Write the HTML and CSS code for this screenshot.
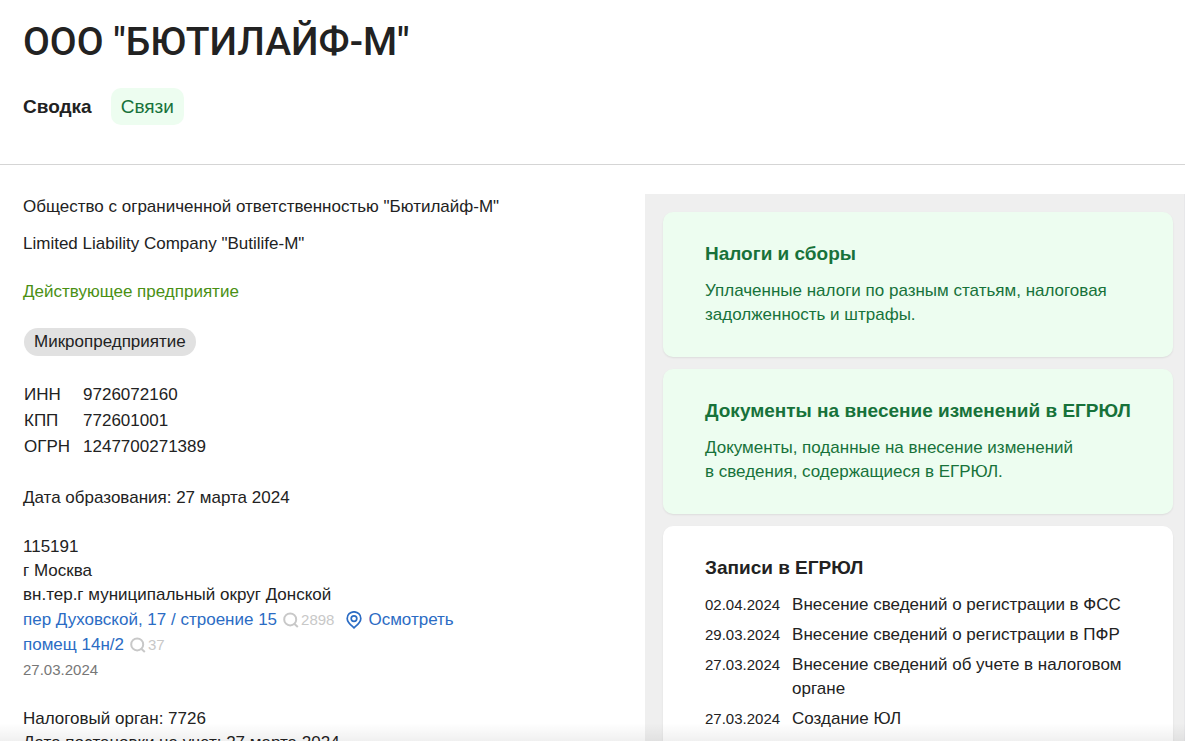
FILE: index.html
```html
<!DOCTYPE html>
<html lang="ru">
<head>
<meta charset="utf-8">
<title>ООО "БЮТИЛАЙФ-М"</title>
<link rel="stylesheet" href="styles.css">
</head>
<body>
<header class="header">
  <h1 class="title">ООО "БЮТИЛАЙФ-М"</h1>
  <nav class="tabs">
    <span class="tab tab-current">Сводка</span>
    <a class="tab tab-link" href="#links">Связи</a>
  </nav>
</header>
<main class="content">
  <section class="summary">
    <p class="full-name">Общество с ограниченной ответственностью "Бютилайф-М"</p>
    <p class="latin-name">Limited Liability Company "Butilife-M"</p>
    <p class="status">Действующее предприятие</p>
    <p class="badge-row"><span class="badge">Микропредприятие</span></p>
    <table class="codes">
      <tr><th scope="row">ИНН</th><td>9726072160</td></tr>
      <tr><th scope="row">КПП</th><td>772601001</td></tr>
      <tr><th scope="row">ОГРН</th><td>1247700271389</td></tr>
    </table>
    <p class="founded">Дата образования: 27 марта 2024</p>
    <address class="address">
      <div>115191</div>
      <div>г Москва</div>
      <div>вн.тер.г муниципальный округ Донской</div>
      <div class="address-line">
        <a href="#street">пер Духовской, 17 / строение 15</a>
        <span class="found"><svg class="lens" viewBox="0 0 16 16" aria-hidden="true"><circle cx="7.2" cy="7.4" r="6"/><path d="M11 11.4l3.8 3.6"/></svg>2898</span>
        <a class="view" href="#map"><svg class="pin" viewBox="0 0 16 18" aria-hidden="true"><path d="M8 16.8C5.6 14.6 1.2 11.6 1.2 7.4a6.8 6.6 0 0 1 13.6 0c0 4.2-4.4 7.2-6.8 9.4z"/><circle cx="8" cy="7.6" r="2.8"/></svg>Осмотреть</a>
      </div>
      <div class="address-line">
        <a href="#room">помещ 14н/2</a>
        <span class="found"><svg class="lens" viewBox="0 0 16 16" aria-hidden="true"><circle cx="7.2" cy="7.4" r="6"/><path d="M11 11.4l3.8 3.6"/></svg>37</span>
      </div>
      <div class="address-date">27.03.2024</div>
    </address>
    <div class="tax">
      <div>Налоговый орган: 7726</div>
      <div>Дата постановки на учет: 27 марта 2024</div>
    </div>
  </section>
  <aside class="panel">
    <a class="card card-green" href="#taxes">
      <h2 class="card-title">Налоги и сборы</h2>
      <p class="card-text">Уплаченные налоги по разным статьям, налоговая задолженность и штрафы.</p>
    </a>
    <a class="card card-green" href="#documents">
      <h2 class="card-title">Документы на внесение изменений в ЕГРЮЛ</h2>
      <p class="card-text">Документы, поданные на внесение изменений<br>в&nbsp;сведения, содержащиеся в&nbsp;ЕГРЮЛ.</p>
    </a>
    <section class="card card-records">
      <h2 class="card-title">Записи в ЕГРЮЛ</h2>
      <dl class="records">
        <dt>02.04.2024</dt><dd>Внесение сведений о регистрации в ФСС</dd>
        <dt>29.03.2024</dt><dd>Внесение сведений о регистрации в ПФР</dd>
        <dt>27.03.2024</dt><dd>Внесение сведений об учете в налоговом органе</dd>
        <dt>27.03.2024</dt><dd>Создание ЮЛ</dd>
      </dl>
    </section>
  </aside>
</main>
<div class="fade"></div>
</body>
</html>
```
FILE: styles.css
```css
* { box-sizing: border-box; }
body {
  margin: 0;
  height: 100vh;
  overflow: hidden;
  display: flex;
  flex-direction: column;
  background: #fff;
  color: #222;
  font: 17px/24px "Liberation Sans", Arial, sans-serif;
}
h1, h2, p, dl, dd { margin: 0; }
a { color: #2b6cc4; text-decoration: none; }

.header {
  flex: none;
  padding: 19px 23px 39px;
  border-bottom: 1px solid #d5d5d5;
}
.title { font: 500 39px/46px Roboto, sans-serif; }
.tabs { display: flex; gap: 19px; margin-top: 23px; }
.tab { font-size: 19px; line-height: 25px; padding: 6px 0; }
.tab-current { font-weight: 700; }
.tab-link {
  padding: 6px 10px;
  border-radius: 10px;
  background: #edfdf0;
  color: #17723a;
}

.content {
  flex: 1;
  min-height: 0;
  display: grid;
  grid-template-columns: minmax(0, 645fr) minmax(0, 540fr);
  padding-top: 29px;
}
.summary { padding: 1px 0 0 23px; }
.latin-name { margin-top: 13px; }
.status { margin-top: 24px; color: #4a9014; }
.badge-row { margin: 24px 0 0 1px; display: flex; }
.badge {
  padding: 2px 10px;
  border-radius: 14px;
  background: #e1e1e1;
}
.codes { margin: 26px 0 0 1px; border-spacing: 0; line-height: 26px; }
.codes th, .codes td { padding: 0; font-weight: 400; text-align: left; }
.codes th { padding-right: 13px; }
.founded { margin-top: 26px; }
.address { margin-top: 25px; font-style: normal; }
.address-line, .address-date { line-height: 25px; }
.address-line { display: flex; align-items: center; gap: 6px; }
.found { display: flex; align-items: center; gap: 2px; color: #c8c8c8; font-size: 15px; }
.lens { width: 16px; height: 16px; fill: none; stroke: #c8c8c8; stroke-width: 2; }
.view { display: flex; align-items: center; gap: 6px; margin-left: 6px; }
.pin { width: 16px; height: 18px; fill: none; stroke: #2b6cc4; stroke-width: 1.7; }
.address-date { color: #777; font-size: 15px; }
.tax { margin-top: 25px; }

.panel {
  display: flex;
  flex-direction: column;
  gap: 12px;
  padding: 18px 12px 0 18px;
  background: #efefef;
  box-shadow: inset -1px 0 #e8e8ea;
}
.card {
  display: block;
  flex: none;
  padding: 30px 42px;
  border-radius: 10px;
  background: #fff;
  box-shadow: 0 1px 2px rgba(0, 0, 0, 0.08);
}
.card-green { background: #edfdf0; color: #17723a; }
.card-title { font-size: 19px; line-height: 24px; font-weight: 700; }
.card-text { margin-top: 13px; }
.records {
  display: grid;
  grid-template-columns: auto 1fr;
  gap: 6px 12px;
  margin-top: 13px;
}
.records dt { font-size: 15px; }

.fade {
  position: absolute;
  left: 0;
  right: 0;
  bottom: 0;
  height: 18px;
  background: linear-gradient(rgba(0, 0, 0, 0), rgba(0, 0, 0, 0.06));
  pointer-events: none;
}
```
